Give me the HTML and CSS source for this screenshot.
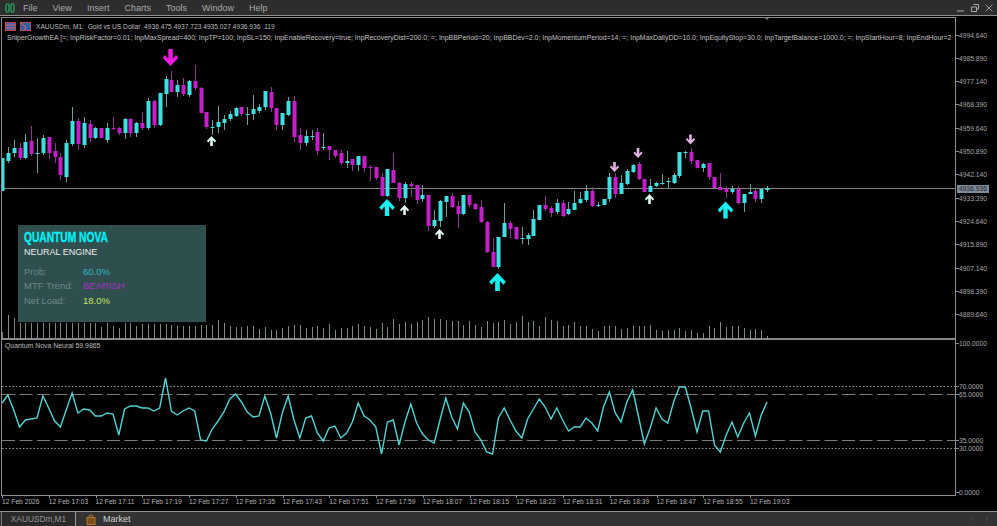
FILE: index.html
```html
<!DOCTYPE html>
<html lang="en">
<head>
    <meta charset="UTF-8">
    <title>XAUUSDm, M1</title>
    <link rel="stylesheet" href="styles.css">
</head>
<body>
    <div class="menubar">
        <svg class="logo" width="10" height="10" viewBox="0 0 10 10">
            <rect x="1" y=".8" width="3" height="8.4" rx="1.5" fill="none" stroke="#2fb56a" stroke-width="1.1"/>
            <rect x="6" y=".8" width="3" height="8.4" rx="1.5" fill="none" stroke="#2fb56a" stroke-width="1.1"/>
        </svg>
        <span class="menu-item">File</span>
        <span class="menu-item">View</span>
        <span class="menu-item">Insert</span>
        <span class="menu-item">Charts</span>
        <span class="menu-item">Tools</span>
        <span class="menu-item">Window</span>
        <span class="menu-item">Help</span>
        <div class="window-controls">
            <svg width="8" height="8" viewBox="0 0 8 8"><path d="M0 7H7" stroke="#999" stroke-width="1.2"/></svg>
            <svg width="8" height="8" viewBox="0 0 8 8"><path d="M2.5 .5H7.5V5H5.5M.5 3H5.5V7.5H.5Z" fill="none" stroke="#aaa"/></svg>
            <svg width="8" height="8" viewBox="0 0 8 8"><path d="M.5 .5L7.5 7.5M7.5 .5L.5 7.5" stroke="#999"/></svg>
        </div>
    </div>

    <div class="frame">
        <div class="pane-row main-row">
            <div class="pane">
                <svg id="mainChart" class="plot" viewBox="2 18 953 320"></svg>
                <div class="chart-title">
                    <svg width="27" height="9" viewBox="0 0 27 9">
                        <rect x=".5" y=".5" width="10" height="8" fill="#3a62b0" stroke="#c04848"/>
                        <path d="M1 3H10M1 6H10" stroke="#d06060"/>
                        <rect x="15.5" y=".5" width="10" height="8" fill="#2f5cab" stroke="#b05050"/>
                        <path d="M16 1L21 5L19 8" fill="none" stroke="#e06060"/>
                    </svg>
                    <span>XAUUSDm, M1:&nbsp; Gold vs US Dollar&nbsp; 4936.475 4937.723 4935.027 4936.936&nbsp; 119</span>
                </div>
                <div class="ea-line">SniperGrowthEA [=; InpRiskFactor=0.01; InpMaxSpread=400; InpTP=100; InpSL=150; InpEnableRecovery=true; InpRecoveryDist=200.0; =; InpBBPeriod=20; InpBBDev=2.0; InpMomentumPeriod=14; =; InpMaxDailyDD=10.0; InpEquityStop=30.0; InpTargetBalance=1000.0; =; InpStartHour=8; InpEndHour=2</div>
                <div class="nova-panel">
                    <div class="nova-title">QUANTUM NOVA</div>
                    <div class="nova-sub">NEURAL ENGINE</div>
                    <div class="nova-rows">
                        <span class="nova-label">Prob:</span><span class="val-prob">60.0%</span>
                        <span class="nova-label">MTF Trend:</span><span class="val-trend">BEARISH</span>
                        <span class="nova-label">Net Load:</span><span class="val-load">18.0%</span>
                    </div>
                </div>
            </div>
            <div class="price-axis">
                <span>4994.640</span>
                <span>4985.890</span>
                <span>4977.140</span>
                <span>4968.390</span>
                <span>4959.640</span>
                <span>4950.890</span>
                <span>4942.140</span>
                <span>4933.390</span>
                <span>4924.640</span>
                <span>4915.890</span>
                <span>4907.140</span>
                <span>4898.390</span>
                <span>4889.640</span>
                <div class="price-tag">4936.936</div>
            </div>
        </div>

        <div class="pane-row sub-row">
            <div class="pane">
                <svg id="subChart" class="plot" viewBox="2 340 953 155"></svg>
                <div class="sub-title">Quantum Nova Neural 59.9865</div>
            </div>
            <div class="level-axis" id="levelAxis"></div>
        </div>

        <div class="time-axis">
            <span>12 Feb 2026</span>
            <span>12 Feb 17:03</span>
            <span>12 Feb 17:11</span>
            <span>12 Feb 17:19</span>
            <span>12 Feb 17:27</span>
            <span>12 Feb 17:35</span>
            <span>12 Feb 17:43</span>
            <span>12 Feb 17:51</span>
            <span>12 Feb 17:59</span>
            <span>12 Feb 18:07</span>
            <span>12 Feb 18:15</span>
            <span>12 Feb 18:23</span>
            <span>12 Feb 18:31</span>
            <span>12 Feb 18:39</span>
            <span>12 Feb 18:47</span>
            <span>12 Feb 18:55</span>
            <span>12 Feb 19:03</span>
        </div>
    </div>

    <div class="tabbar">
        <div class="tab">XAUUSDm,M1</div>
        <div class="market">
            <svg width="10" height="11" viewBox="0 0 10 11">
                <rect x="1" y="3.5" width="8" height="7" fill="#7a4e18" stroke="#b5762a"/>
                <path d="M3.2 3.5V1.2H6.8V3.5" fill="none" stroke="#b5762a"/>
            </svg>
            <span>Market</span>
        </div>
        <div class="tab-arrows"><span>‹</span><span>›</span></div>
    </div>

    <script src="chart.js"></script>
</body>
</html>
```

FILE: styles.css
```css
* {
    box-sizing: border-box;
}

body {
    margin: 0;
    width: 997px;
    height: 526px;
    display: flex;
    flex-direction: column;
    overflow: hidden;
    background-color: #000;
    font-family: "Liberation Sans", Arial, sans-serif;
}

.menubar {
    height: 16px;
    flex: none;
    display: flex;
    align-items: center;
    gap: 15px;
    padding-left: 5px;
    background-color: #2d2d2d;
    border-bottom: 1px solid #8f8f8f;
    color: #a9a9a9;
    font-size: 9px;
}

.logo {
    margin-right: -7px;
}

.window-controls {
    margin-left: auto;
    margin-right: 4px;
    display: flex;
    gap: 6px;
}

.frame {
    flex: 1;
    display: flex;
    flex-direction: column;
    min-height: 0;
    padding-top: 1px;
}

.pane-row {
    display: flex;
    margin-left: 1px;
}

.main-row {
    height: 323px;
}

.sub-row {
    height: 156px;
}

.pane {
    position: relative;
    width: 955px;
    border: 1px solid #8c8c8c;
    border-bottom: 2px solid #8a8a8a;
    overflow: hidden;
}

.sub-row .pane {
    border-top: 0;
    border-bottom: 1px solid #8c8c8c;
}

.plot {
    display: block;
    width: 953px;
    height: 100%;
}

.chart-title {
    position: absolute;
    top: 4px;
    left: 3px;
    display: flex;
    align-items: center;
    gap: 4px;
    color: #bdbdbd;
    font-size: 6.65px;
    white-space: pre;
}

.ea-line {
    position: absolute;
    top: 16px;
    left: 5px;
    color: #c4c4c4;
    font-size: 6.95px;
    white-space: nowrap;
}

.sub-title {
    position: absolute;
    top: 2px;
    left: 3px;
    color: #bdbdbd;
    font-size: 6.9px;
}

.nova-panel {
    position: absolute;
    left: 16px;
    top: 207px;
    width: 188px;
    height: 97px;
    padding: 5px 6px;
    background-color: #2f4f4f;
}

.nova-title {
    height: 14px;
    transform: scaleX(0.66);
    transform-origin: left center;
    color: #00f0f5;
    font-size: 15.5px;
    line-height: 14px;
    font-weight: bold;
    white-space: nowrap;
    -webkit-text-stroke: 0.4px #00f0f5;
}

.nova-sub {
    margin-top: 3px;
    color: #eee;
    font-size: 9px;
}

.nova-rows {
    margin-top: 7px;
    display: grid;
    grid-template-columns: 59px 1fr;
    grid-auto-rows: 14.6px;
    font-size: 9.5px;
    align-items: center;
}

.nova-label {
    color: #6e8787;
}

.val-prob {
    color: #33b6c4;
}

.val-trend {
    color: #a52ec4;
}

.val-load {
    color: #c6e25f;
}

.price-axis,
.level-axis {
    position: relative;
    flex: 1;
    color: #a8a8a8;
    font-size: 6.7px;
}

.price-axis {
    display: flex;
    flex-direction: column;
    padding-top: 13.5px;
}

.price-axis span {
    height: 23.33px;
    line-height: 9px;
    padding-left: 3px;
    position: relative;
}

.price-axis span::before,
.level-axis span::before {
    content: "";
    position: absolute;
    left: 0;
    top: 4px;
    width: 3px;
    height: 1px;
    background-color: #8c8c8c;
}

.price-tag {
    position: absolute;
    left: 1px;
    top: 168px;
    width: 32px;
    height: 8px;
    line-height: 8px;
    padding-left: 2px;
    background-color: #7e8c9c;
    color: #222;
}

.level-axis span {
    position: absolute;
    left: 0;
    line-height: 9px;
    padding-left: 3px;
}

.time-axis {
    flex: 1;
    display: flex;
    padding-left: 2px;
    color: #b4b4b4;
    font-size: 6.7px;
}

.time-axis span {
    position: relative;
    flex: none;
    width: 46.75px;
    padding-top: 2px;
}

.time-axis span::before {
    content: "";
    position: absolute;
    left: 0;
    top: 0;
    width: 1px;
    height: 2px;
    background-color: #8c8c8c;
}

.tabbar {
    height: 15px;
    flex: none;
    display: flex;
    align-items: stretch;
    padding-left: 1px;
    background-color: #333;
    border-top: 1px solid #8f8f8f;
}

.tab {
    width: 75px;
    padding-top: 2px;
    text-align: center;
    background-color: #2a2a2a;
    border-right: 1px solid #9a9a9a;
    border-left: 1px solid #777;
    color: #939393;
    font-size: 8.3px;
}

.market {
    display: flex;
    align-items: center;
    gap: 7px;
    padding-left: 10px;
    color: #d0d0d0;
    font-size: 9px;
}

.tab-arrows {
    margin-left: auto;
    margin-right: 9px;
    display: flex;
    gap: 11px;
    align-items: center;
    color: #555;
    font-size: 9px;
}
```

FILE: chart.js
```js
// bars: direction, body top, body bottom, wick top, wick bottom (page y)
var bars = [
    ['u',158,191,158,191],['u',153,161,147,163],['u',148,153,140,157],['d',148,158,143,160],
    ['u',142,158,134,159],['d',141,154,126,156],['u',153,154,138,173],['u',138,153,135,155],
    ['d',137,153,137,159],['d',151,157,143,163],['d',157,175,153,180],['u',143,177,140,182],
    ['u',121,144,107,146],['d',121,144,118,150],['u',123,145,117,148],['d',124,138,120,142],
    ['u',128,138,127,139],['d',128,138,128,138],['u',128,140,123,143],['d',128,129,117,130],
    ['d',128,133,127,135],['u',119,133,118,139],['d',119,133,118,137],['u',123,133,122,137],
    ['d',123,128,112,130],['u',101,128,98,130],['d',101,125,100,128],['u',93,125,93,126],
    ['u',79,94,76,107],['d',80,92,71,92],['u',85,92,80,97],['d',85,94,78,96],
    ['u',81,95,80,97],['d',81,88,65,90],['d',88,113,87,113],['d',112,127,112,129],
    ['u',127,128,120,135],['u',122,127,106,133],['u',119,123,115,130],['u',114,119,111,121],
    ['u',108,116,107,117],['d',107,114,107,116],['u',114,115,107,125],['u',109,114,95,120],
    ['u',107,111,104,113],['u',91,107,91,110],['d',92,108,87,112],['d',108,125,108,130],
    ['u',113,125,113,130],['u',101,115,97,116],['d',101,137,96,142],['d',135,143,128,150],
    ['u',136,143,130,146],['u',136,137,130,140],['d',132,151,128,155],['u',147,148,133,150],
    ['d',146,150,146,160],['d',150,156,150,158],['d',153,163,150,165],['u',161,163,151,168],
    ['d',159,165,159,171],['u',156,165,156,171],['d',156,168,156,172],['d',167,168,165,181],
    ['d',167,178,167,180],['d',177,196,173,196],['u',169,196,169,197],['d',170,183,153,183],
    ['d',183,198,182,201],['u',184,198,182,203],['d',184,186,182,197],['d',185,200,185,204],
    ['u',195,199,185,202],['d',195,226,195,231],['u',220,226,210,228],['u',201,221,200,227],
    ['u',196,202,196,217],['d',196,207,193,208],['d',206,214,201,228],['u',195,214,195,215],
    ['d',195,205,195,207],['d',204,209,203,210],['d',207,222,200,223],['d',222,252,221,253],
    ['d',252,267,238,267],['u',237,267,237,269],['u',223,237,203,237],['d',223,229,221,238],
    ['d',227,239,227,240],['u',238,239,227,244],['u',235,239,233,245],['u',219,236,210,236],
    ['u',205,220,205,220],['d',205,209,196,211],['d',208,213,206,217],['u',203,212,199,214],
    ['d',203,216,200,217],['u',209,214,202,215],['u',203,210,191,210],['u',199,203,192,204],
    ['u',191,200,185,202],['d',191,206,187,207],['u',205,206,202,207],['u',199,205,199,205],
    ['u',177,199,173,202],['d',177,194,173,198],['u',183,194,175,194],['u',171,184,169,185],
    ['u',165,172,164,173],['d',164,179,162,180],['d',179,192,179,192],['u',186,192,179,192],
    ['u',183,186,182,187],['u',183,184,174,185],['u',181,182,178,188],['u',175,183,173,184],
    ['u',152,176,152,178],['u',152,153,151,158],['d',152,161,148,164],['d',160,168,160,168],
    ['u',164,168,163,172],['d',163,177,163,180],['d',177,188,177,188],['d',187,190,173,190],
    ['d',189,192,186,198],['u',189,192,186,194],['d',189,203,186,204],['u',194,203,194,212],
    ['u',192,194,184,194],['d',191,199,189,202],['u',189,199,189,203],['u',188,190,186,192]
];

var volumes = [
    6,23,20,15,15,15,15,15,15,15,15,15,15,15,15,15,15,11,15,12,10,15,15,12,14,14,14,14,14,13,
    12,12,12,12,13,13,13,18,15,12,11,11,12,12,9,11,8,8,10,12,13,13,10,11,12,10,14,
    8,10,10,12,14,12,11,9,15,11,19,14,16,14,16,18,21,19,19,18,17,17,13,17,13,11,17,15,16,18,14,16,
    22,16,17,12,21,18,17,12,13,16,12,12,9,7,12,12,12,9,10,12,12,12,13,8,
    7,8,8,10,7,8,5,5,12,10,16,11,12,12,10,8,9,8,2
];

// oscillator, page y of each bar
var osc = [
    403,395,410,427,420,419,418,396,408,421,427,410,393,413,409,410,416,416,413,414,
    435,409,406,406,408,408,411,408,378,411,415,411,408,411,440,441,429,421,412,399,
    394,402,412,417,416,396,413,438,413,396,420,438,418,416,433,441,428,426,438,433,
    422,403,416,420,427,454,422,420,445,422,404,423,434,440,443,420,398,417,429,403,
    412,432,440,452,454,418,408,420,431,438,419,409,399,407,419,408,420,431,427,427,
    418,423,431,407,392,413,422,402,390,417,444,428,408,419,423,402,387,387,408,432,
    411,411,445,452,435,422,437,423,413,436,415,402
];

// arrows: x, y of the centre, size, colour, points up
var arrows = [
    [170.5,57.5,17,'#f018e0',false],[387,207.5,17,'#19f0f0',true],[497.5,282,18,'#19f0f0',true],
    [725.5,210,17,'#19f0f0',true],[211.5,141,10,'#e4fbf6',true],[404.5,210,10,'#e4fbf6',true],
    [439.5,234,10,'#e4fbf6',true],[649.5,199,10,'#e4fbf6',true],[614.5,167,10,'#e5b5e6',false],
    [638,153,10,'#e5b5e6',false],[690.5,139.5,10,'#e5b5e6',false]
];

var levels = [
    [100, 343, '100.0000'], [70, 386.5, '70.0000'], [65, 394.5, '65.0000'],
    [35, 440.5, '35.0000'], [30, 448.5, '30.0000'], [0, 492, '0.0000']
];

function barX(i) {
    return 2 + i * 5.84;
}

function arrowPath(a) {
    var s = a[2] / 2;
    var d = a[4] ? 1 : -1;
    var x = a[0];
    var y = a[1];
    var w = s * 0.26;
    return 'M' + x + ' ' + (y - s * d) +
        'L' + (x + s * 0.92) + ' ' + (y - s * d * 0.02) +
        'L' + (x + s * 0.66) + ' ' + (y + s * d * 0.3) +
        'L' + (x + w) + ' ' + (y - s * d * 0.14) +
        'L' + (x + w) + ' ' + (y + s * d) +
        'L' + (x - w) + ' ' + (y + s * d) +
        'L' + (x - w) + ' ' + (y - s * d * 0.14) +
        'L' + (x - s * 0.66) + ' ' + (y + s * d * 0.3) +
        'L' + (x - s * 0.92) + ' ' + (y - s * d * 0.02) + 'Z';
}

function drawMain() {
    var html = '';

    volumes.forEach(function (h, i) {
        var x = Math.round(barX(i)) + 0.5;
        html += '<line x1="' + x + '" x2="' + x + '" y1="338" y2="' + (338 - h) + '" stroke="#7d8a7d"/>';
    });

    html += '<line x1="2" x2="955" y1="188.5" y2="188.5" stroke="#80857f"/>';

    bars.forEach(function (b, i) {
        var x = Math.round(barX(i));
        var up = b[0] === 'u';
        html += '<line x1="' + (x + 0.5) + '" x2="' + (x + 0.5) + '" y1="' + b[3] + '" y2="' + b[4] +
            '" stroke="' + (up ? '#6d9c9c' : '#8a3a8a') + '"/>';
        html += '<rect x="' + (x - 1.5) + '" y="' + b[1] + '" width="4" height="' + (b[2] - b[1]) +
            '" fill="' + (up ? '#3fe0e0' : '#c41fc8') + '"/>';
    });

    arrows.forEach(function (a) {
        html += '<path d="' + arrowPath(a) + '" fill="' + a[3] + '"/>';
    });

    html += '<path d="M765 18H769L767 20Z" fill="#777"/>';
    document.getElementById('mainChart').innerHTML = html;
}

function drawSub() {
    var html = '';

    levels.forEach(function (l) {
        if (l[0] === 100 || l[0] === 0) return;
        var dash = (l[0] === 70 || l[0] === 30) ? '1.5 2' : '13 4.5';
        var color = (l[0] === 70 || l[0] === 30) ? '#989898' : '#7c7c7c';
        html += '<line x1="2" x2="955" y1="' + l[1] + '" y2="' + l[1] +
            '" stroke="' + color + '" stroke-dasharray="' + dash + '"/>';
    });

    var pts = osc.map(function (y, i) {
        return barX(i).toFixed(1) + ',' + y;
    }).join(' ');
    html += '<polyline points="' + pts + '" fill="none" stroke="#52d4d4" stroke-width="1.4"/>';
    document.getElementById('subChart').innerHTML = html;
}

function drawLevelLabels() {
    var axis = document.getElementById('levelAxis');
    levels.forEach(function (l) {
        var label = document.createElement('span');
        label.textContent = l[2];
        label.style.top = (l[1] - 340 - 4.5) + 'px';
        axis.appendChild(label);
    });
}

drawMain();
drawSub();
drawLevelLabels();
```
